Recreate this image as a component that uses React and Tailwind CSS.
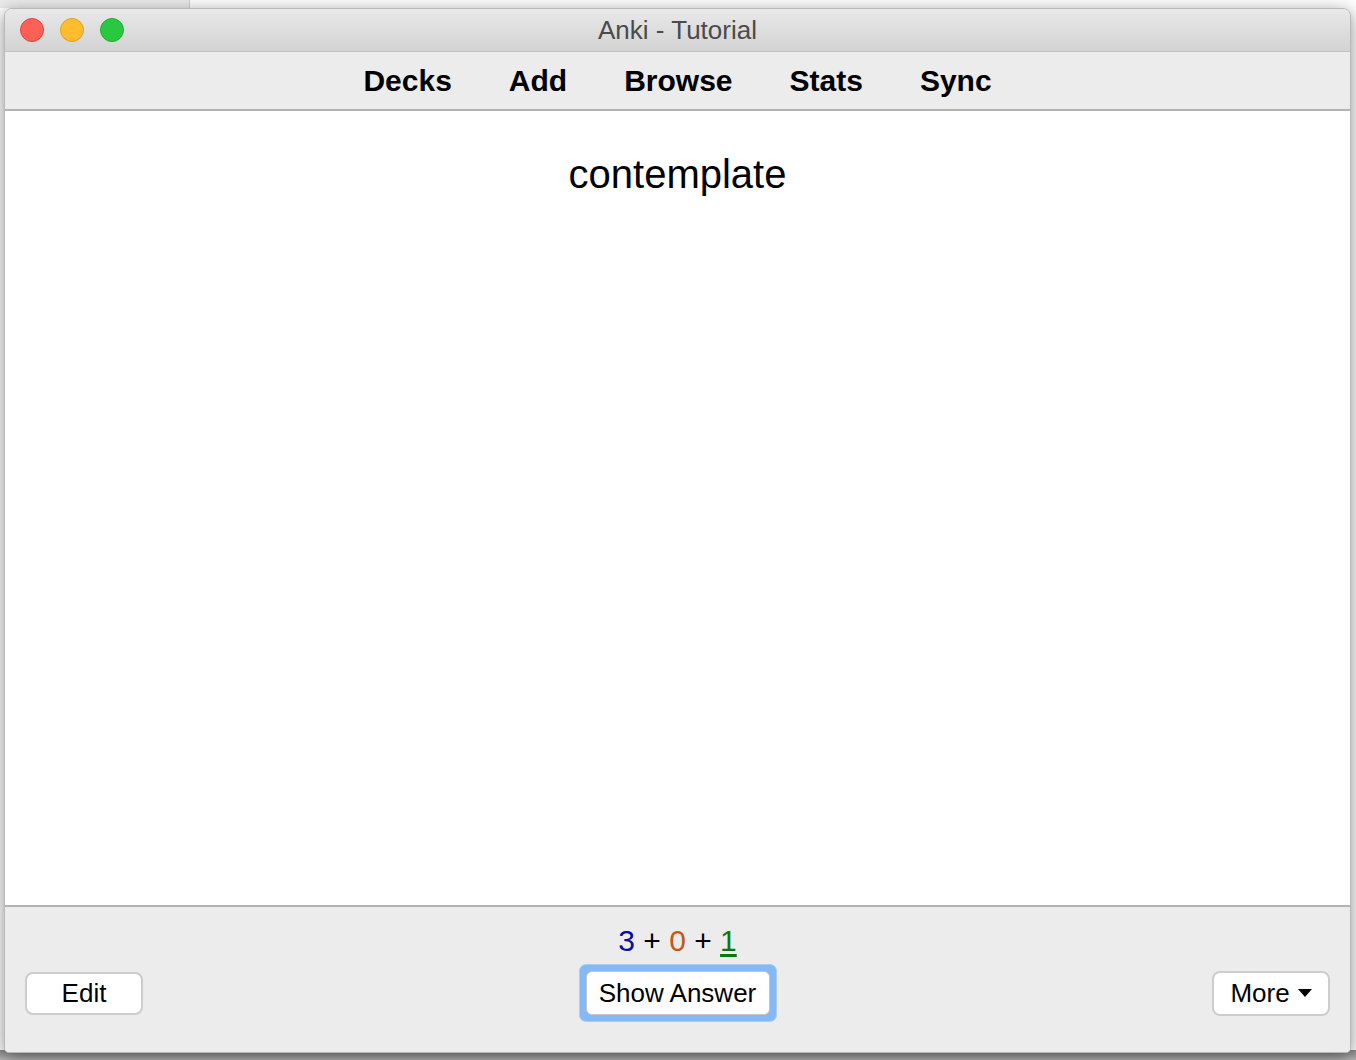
import React from "react";

const font = { fontFamily: '"Liberation Sans", Arial, sans-serif' };

const TrafficLight = ({ fill, ring }) => (
  <span className={`block w-[24px] h-[24px] rounded-full border ${fill} ${ring}`} />
);

const navItems = ["Decks", "Add", "Browse", "Stats", "Sync"];

const App = () => {
  return (
    <div
      className="w-[1356px] h-[1060px] bg-white overflow-hidden pt-[8px] pl-[4px] relative"
      style={font}
    >
      {/* window behind */}
      <div className="absolute left-0 top-0 w-[190px] h-[8px] bg-[#ececec] border-r border-[#d0d0d0]" />
      <div className="absolute left-0 bottom-0 w-[1356px] h-[10px] bg-gradient-to-b from-[#8c8c8c] to-[#b5b5b5]" />

      <div className="relative w-[1347px] h-[1045px] flex flex-col rounded-t-[8px] rounded-b-[5px] overflow-hidden border border-[#b8b8b8] shadow-[0_4px_18px_rgba(0,0,0,0.45)] bg-[#ececec]">
        {/* title bar */}
        <div className="h-[43px] shrink-0 flex items-center px-[15px] bg-gradient-to-b from-[#e9e9e9] to-[#d3d3d3] border-b border-[#c2c2c2] relative">
          <div className="flex gap-[16px] items-center">
            <TrafficLight fill="bg-[#fe5f57]" ring="border-[#e1453d]" />
            <TrafficLight fill="bg-[#febc2e]" ring="border-[#dfa023]" />
            <TrafficLight fill="bg-[#29c840]" ring="border-[#1fae2f]" />
          </div>
          <div className="absolute inset-0 flex items-center justify-center text-[26px] text-[#4b4b4b] pointer-events-none">
            Anki - Tutorial
          </div>
        </div>

        {/* toolbar */}
        <div className="h-[59px] shrink-0 flex items-center justify-center gap-[57px] bg-[#ececec] border-b-2 border-[#b3b3b3]">
          {navItems.map((item) => (
            <span key={item} className="text-[30px] font-bold text-black">
              {item}
            </span>
          ))}
        </div>

        {/* card */}
        <div className="flex-1 bg-white flex justify-center pt-[39px] border-b-2 border-[#b3b3b3]">
          <p className="text-[40px] leading-[48px] text-black h-[48px]">contemplate</p>
        </div>

        {/* bottom bar */}
        <div className="h-[145px] shrink-0 bg-[#ececec] flex flex-col px-[20px] pt-[17px]">
          <div className="text-center text-[30px] leading-[34px] text-black">
            <span className="text-[#0b0ba0]">3</span> +{" "}
            <span className="text-[#c35817]">0</span> +{" "}
            <span className="text-[#087a0d] underline underline-offset-[3px]">1</span>
          </div>
          <div className="flex items-center justify-between mt-[6px]">
            <button className="w-[118px] h-[43px] bg-white border-2 border-[#cdcdcd] rounded-[8px] text-[26px] text-black">
              Edit
            </button>
            <div className="p-[6px] rounded-[7px] bg-[#85b9f3] border border-[#a9cdf7]">
              <button className="w-[184px] h-[44px] bg-white border border-[#c4c4c4] rounded-[6px] text-[26px] text-black">
                Show Answer
              </button>
            </div>
            <button className="w-[118px] h-[45px] bg-white border-2 border-[#cdcdcd] rounded-[8px] text-[26px] text-black flex items-center justify-center gap-[8px]">
              More
              <svg width="14" height="8" viewBox="0 0 14 8">
                <path d="M0 0 L14 0 L7 8 Z" fill="#000" />
              </svg>
            </button>
          </div>
        </div>
      </div>
    </div>
  );
};

export default App;
